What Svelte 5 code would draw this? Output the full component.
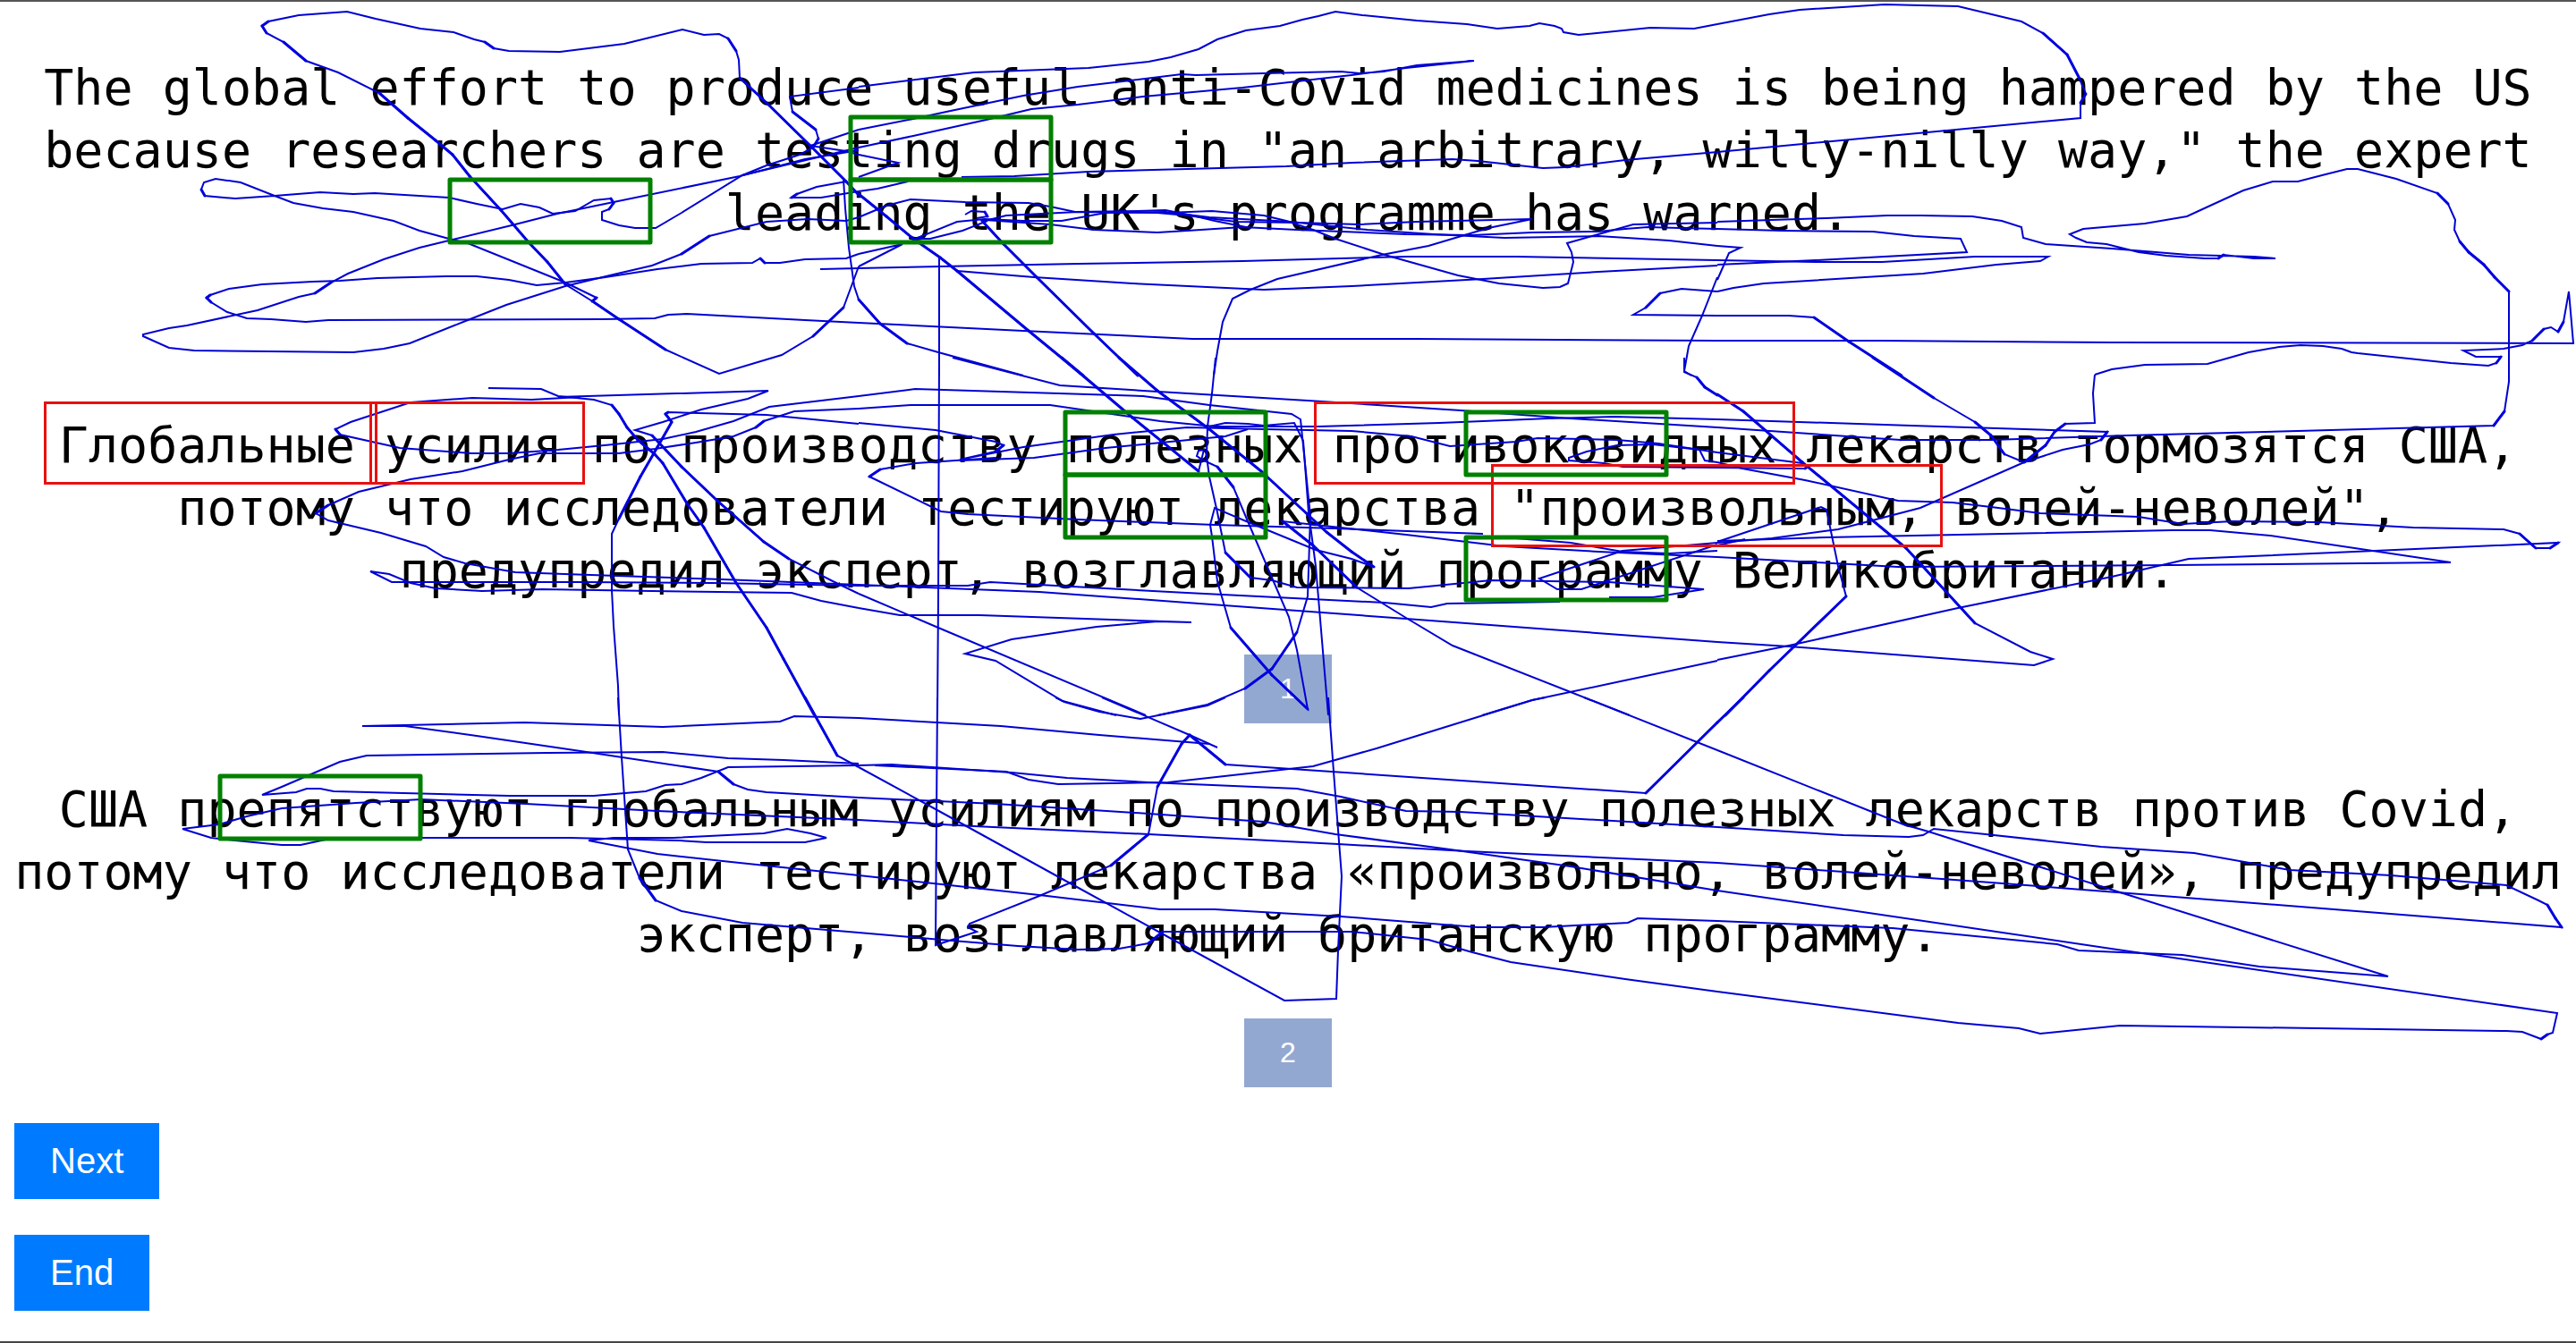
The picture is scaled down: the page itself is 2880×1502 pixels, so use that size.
<script>
  const source =
    'The global effort to produce useful anti-Covid medicines is being hampered by the US because researchers are testing drugs in "an arbitrary, willy-nilly way," the expert leading the UK\'s programme has warned.';

  const translations = [
    'Глобальные усилия по производству полезных противоковидных лекарств тормозятся США, потому что исследователи тестируют лекарства "произвольным, волей-неволей", предупредил эксперт, возглавляющий программу Великобритании.',
    'США препятствуют глобальным усилиям по производству полезных лекарств против Covid, потому что исследователи тестируют лекарства «произвольно, волей-неволей», предупредил эксперт, возглавляющий британскую программу.'
  ];

  const words = [
    { x: 50, y: 450, w: 370, h: 90 },
    { x: 414, y: 450, w: 238, h: 90 },
    { x: 1470, y: 450, w: 535, h: 90 },
    { x: 1668, y: 520, w: 502, h: 90 }
  ];

  const fixations = [
    [503, 201], [951, 131], [951, 201], [1191, 461],
    [1191, 531], [1639, 461], [1639, 601], [246, 868]
  ];

  // Gaze samples are stored per screen region, in tracker units.
  const UNIT_X = 30 / 49;
  const UNIT_Y = 1 / 3;

  const regions = [
    { x: 0, y: 0, lines: [
      '1568,655 1545,610 1480,490 1400,345 1350,260 1349,200 1344,170 1330,130 1313,115 1285,117 1247,100 1140,147 1022,175 930,170 902,161 886,140 866,131 828,108 768,97 686,64 634,38 546,52 490,73 478,86 487,110 518,141 558,204 617,242 693,311 745,397 795,470 826,520 858,592 915,704 966,812 1000,880 1033,955 1085,1015 1130,1070 1215,1174 1313,1255 1428,1190 1485,1128 1540,1033 1556,950 1568,895',
      '1082,1012 1090,1000 1033,948 855,817 820,800 766,773 718,740 645,712 590,700 535,680 502,657 440,612 393,600 373,612 368,636 374,656 430,666 502,657 585,646 645,651 685,647 820,663 870,685 918,702 950,683 985,697 1010,718 1050,708 1085,672 1115,667 1120,680 1113,703 1100,712 1099,738 1130,757 1160,765 1197,765 1245,714 1355,587 1400,555 1460,520 1485,495 1495,465 1490,435 1447,375 1442,325 1568,295',
      '1568,505 1470,535 1350,590 1120,678 1018,718 935,755 826,804 766,832 700,870 635,917 605,947 575,983 545,997 470,1040 342,1092 308,1100 262,1122 262,1128 308,1166 355,1176 645,1181 700,1171 748,1152 855,1073 925,1022 1033,960 1120,922 1190,892 1245,852 1295,793 1400,745 1475,735 1545,742 1568,728',
      '1568,1082 1470,1073 1255,1054 1220,1056 1195,1067 1100,1070 600,1075 558,1081 495,1071 450,1069 415,1047 385,1015 378,1000 384,990 418,970 478,954 570,944 620,941 690,934 815,926 870,927 930,938 980,957 1033,949 1105,930 1200,903 1280,884 1373,882 1388,868 1397,882 1425,883 1470,871 1545,867 1568,852',
      '1545,610 1492,626 1455,650 1446,664 1500,664 1568,642',
      '1480,490 1545,507 1568,520',
      '1480,490 1568,436',
      '1355,587 1568,496',
      '1497,902 1568,900',
      '1540,600 1543,700 1550,830 1560,960 1568,1005'
    ] },
    { x: 960, y: 0, lines: [
      '0,292 210,244 420,228 530,208 570,193 620,164 655,131 707,102 770,86 810,66 840,55 870,40 920,52 1020,70 1110,82 1166,97 1225,86 1243,77 1270,86 1283,97 1287,108 1315,118 1445,92 1525,96 1568,82',
      '0,436 100,399 160,374 300,320 400,292 590,248 615,252 740,246 880,240 915,246 958,240 1020,220 1124,205 1000,228 900,252 700,294 520,325 400,350 315,367 240,399 100,455 0,496',
      '0,520 72,546 0,595',
      '188,593 285,590 420,577 600,567 780,557 900,545 1085,534 1130,540 1250,565 1290,560 1400,537 1568,511',
      '0,642 35,632 90,608',
      '0,728 50,690 95,670 195,678 310,680 350,693 395,710 510,708 560,705 610,722 650,740 715,765',
      '195,720 205,708 230,712 235,725 215,732 230,740 270,722 400,712 545,715 600,722 690,745 800,748 915,752 1020,745 1230,735 1150,765 1040,825 955,855 765,937 715,972 683,1002 664,1080 655,1180 648,1260',
      '560,715 645,707 740,722 780,742 830,770 870,800 960,855 1095,925 1170,950 1250,967 1280,962 1295,950 1305,880 1302,845 1293,815 1350,787 1415,753 1568,746',
      '230,738 350,752 430,772 545,779 600,775 700,762 800,770 1000,785 1120,790 1230,780 1350,778 1400,768 1440,763 1500,765 1568,768',
      '100,803 180,745 230,735 300,742 370,740 450,715 560,712 640,730 790,745 850,757 930,772 1050,787 1180,797 1350,792 1480,808 1568,825',
      '100,800 130,800 190,775 235,742',
      '0,650 50,725 100,800 148,865 180,910 310,1110 410,1260',
      '225,740 265,820 325,930 430,1120 510,1260',
      '147,860 147,1260',
      '0,900 150,895 400,885 700,876 1000,861 1200,862 1568,874',
      '180,910 320,930 500,950 740,973 900,960 1140,935 1350,912 1568,890',
      '0,1083 300,1110 610,1136 1020,1138 1568,1142',
      '0,1005 40,1085 88,1152 145,1183 300,1260',
      '0,852 50,832 80,818 0,895',
      '1568,978 1503,970 1463,985 1437,1033 1415,1055 1568,1058',
      '1568,930 1540,1060 1515,1160 1507,1245 1520,1260'
    ] },
    { x: 1920, y: 0, lines: [
      '0,82 95,48 150,34 305,16 440,20 555,72 595,112 638,182 662,265 673,315 663,345 663,395 0,511',
      '0,744 200,732 310,722 370,722 465,727 520,742 555,763 558,798 600,818 720,834 860,855 980,860 1020,866 980,868 925,855 915,866 890,868 820,857 770,845 710,818 675,812 655,798 643,787 668,769 780,750 858,727 900,690 960,638 1015,609 1060,608 1110,584 1150,566 1170,566 1240,600 1315,648 1335,685 1348,737 1346,770 1355,810 1372,845 1400,888 1420,930 1445,978 1445,1260',
      '0,768 120,773 285,776 360,792 445,800 455,845 180,872 0,888',
      '0,825 42,831 22,850 12,890 0,940',
      '0,874 180,879 300,878 470,860 605,862 590,877 510,888 375,918 85,952 30,965 0,978',
      '0,1058 130,1060 177,1066 240,1145 337,1260',
      '0,1142 300,1143 720,1148 1563,1152 1555,978 1545,1080 1535,1112 1523,1097 1510,1105 1488,1142 1470,1157 1435,1170 1363,1175 1385,1196 1430,1198 1422,1217 1408,1228 1340,1217 1170,1184 1158,1183 1140,1170 1105,1162 1065,1159 1025,1165 970,1182 895,1220 780,1224 720,1240 690,1258'
    ] },
    { x: 0, y: 400, lines: [
      '892,102 988,104 1020,130 1085,142 1118,160 1130,188 1145,235 1165,275 1195,325 1210,355 1255,490 1285,570 1345,755 1400,905 1430,1010 1487,1198',
      '1020,133 1403,112 1365,138 1280,173 1210,215 1160,243 1190,262 1245,365 1310,480 1395,618 1440,675 1520,750 1568,792',
      '1568,130 1405,166 1340,213 1270,250 1210,273 1120,292 1020,310 930,320 860,320 730,302 620,258 613,240 640,215 750,150 863,135 970,140 1060,132',
      '1568,171 1450,180 1395,213 1380,235 1340,263 1270,285 1195,305 1130,322 985,320 930,342 845,382 750,408 655,450 600,495 577,523 600,545 695,587 778,632 810,668 850,690 940,720 1030,725 1320,745 1568,762',
      '1568,222 1400,192 1220,183 1215,190 1226,215 1200,300 1170,400 1130,540 1118,590 1118,780 1120,900 1128,1100 1130,1200',
      '1568,840 1500,815 1445,789 1190,784 990,777 880,784 795,773 750,757 710,727 676,718 715,753 1060,752 1300,757 1568,765'
    ] },
    { x: 960, y: 400, lines: [
      '147,0 145,800 143,1200',
      '172,0 368,92 520,112 820,145 1100,178 1300,203 1568,234',
      '0,130 103,106 520,128 640,158 790,190 807,208 825,530 820,800 800,920 755,1045 705,1110 637,1165 545,1200',
      '0,170 95,160 350,159 550,212 650,230 840,232 1060,220 1260,203 1380,197 1568,208',
      '0,220 140,243 250,283 265,295 250,315 185,342 300,300 465,257 600,235 740,240 900,247 1010,264 1080,297 1200,283 1240,271 1385,275 1460,288 1568,317',
      '185,345 320,335 450,302 670,265 710,240',
      '640,232 670,220 710,222 740,228 795,220 812,280 822,520 835,700 858,1200',
      '370,0 500,200 620,380 630,310 620,312 618,330 630,345 655,365 685,435 710,550 760,760 785,870 800,980 820,1180 755,1065 680,905 655,750 645,600 642,560 650,505 715,555 835,645 900,675 940,703 900,650 855,585 735,380 640,240 545,110 475,0',
      '652,0 645,120 637,230 636,330 640,400 655,520 670,655 715,738 755,748 800,770 1005,773 1155,747 1370,752 1543,776 1450,803 1370,803',
      '250,335 105,355 40,375 20,400 150,515 200,525 400,543 650,560 870,574 1140,592',
      '1200,605 1300,620 1395,650 1480,658 1568,648',
      '1568,668 1350,650 1180,633 1000,595 850,565 775,550 830,630 910,770 1000,872 1085,965 1300,1122 1408,1200',
      '0,765 200,765 240,753 300,758 600,790 960,822 1045,838 1075,826 1280,820',
      '0,762 330,785 600,822 1000,876 1568,953',
      '0,840 75,864 220,863 607,888 545,884 435,902 280,945 195,993 250,1018 372,1153 470,1200',
      '0,792 145,905 525,1200',
      '1138,1200 1230,1150 1568,1018',
      '1568,622 1395,648 1243,740 1275,776 1320,778 1568,628',
      '1507,0 1507,48 1530,65 1545,98 1568,125',
      '1568,352 1545,345 1535,310 1450,290 1385,295 1330,315 1297,335 1297,345 1360,355 1395,366 1568,370'
    ] },
    { x: 1920, y: 400, lines: [
      '285,0 395,135 470,215 500,262 525,325 560,352 600,295 615,250 635,223 690,220 686,120 690,58',
      '560,352 630,310 680,292 700,275 712,250 355,228 0,207',
      '0,234 335,275 500,275 750,260 1060,246 1418,228 1437,180 1445,80 1445,0',
      '0,122 48,180 155,350 345,640 470,892 572,988 613,1010 578,1033 130,970 0,953',
      '0,317 155,353',
      '0,368 160,372 165,367',
      '0,352 45,372 160,412 330,480 430,487 500,502 590,522 770,535 850,557 940,550 1100,552 1270,570 1435,576 1465,592 1495,638 1520,640 1535,620 1200,647 860,676 720,735 440,840 130,965 0,1015',
      '0,620 100,605 220,576 370,505 560,352',
      '0,618 190,500 200,510 220,700 235,800 95,1050 15,1200',
      '0,616 200,603 830,579 900,578 1010,598 1340,688 830,695 330,702 0,668',
      '0,630 50,610'
    ] },
    { x: 0, y: 780, lines: [
      '1128,0 1135,200 1147,510 1168,605 1198,680 1245,716 1355,755 1568,788',
      '1470,0 1528,195 1568,235',
      '1568,68 1450,62 1425,82 1210,100 957,85 662,97 740,97 870,128 1060,180 1312,248 1340,290 1365,308 1400,317 1568,335',
      '1568,222 1430,210 1330,205 1210,182 1000,187 670,196 620,215 515,300 478,327 540,317 560,307 585,306 610,314 930,330 1085,330 1180,314 1215,295 1245,290 1280,270 1330,235 1568,227',
      '1568,412 1200,380 960,358 770,342 650,355 515,373 450,400 400,425 333,442 385,472 430,480 515,496 548,496 595,478',
      '768,470 1040,471 1240,480 1290,487 1470,487 1510,470 1480,455 1437,440 1395,455 1230,472 1120,470 1075,480 1200,525 1320,548 1568,598'
    ] },
    { x: 960, y: 780, lines: [
      '143,0 142,400 140,832 215,785 200,770 203,758 330,665 460,565 530,460 545,300 590,155 605,125 670,224 1438,320 1568,85',
      '0,68 260,97 440,126 640,155',
      '445,0 605,125 655,168',
      '360,0 375,15 440,48 515,73 637,27 670,0',
      '858,0 868,250 882,600 876,850 873,1010 778,1018 550,790 380,618 140,375 0,235',
      '0,227 60,225 280,253 380,271 530,285 800,307 880,332 1000,382 1100,385 1568,435',
      '30,228 270,250 310,277 365,292 565,285 830,230 945,172 1230,10 1255,0',
      '1325,0 1568,178',
      '0,336 250,358 530,390 740,418 870,458 1080,510 1300,568 1568,648',
      '0,412 210,432 530,460 875,492 1110,515 1568,555',
      '0,598 330,662 550,710 650,710 880,736 1130,770 1250,770 1405,755 1423,740 1568,750',
      '0,788 150,812 290,835 400,845 475,842 530,825 555,787 900,785 1040,812 1120,855 1190,887 1400,945 1568,988'
    ] },
    { x: 1920, y: 780, lines: [
      '48,0 0,85',
      '0,178 340,425 385,450 730,650 1225,937 990,902 850,865 660,848 620,828 320,774 0,750',
      '0,435 230,462 350,468 375,462 395,442 490,460 700,500 870,522 1045,578 1230,598 1440,630 1500,680 1515,695 1530,740 1542,772 730,655 500,620 230,585 0,555',
      '0,648 730,845 1533,1058 1525,1125 1515,1130 1505,1145 1470,1122 1440,1118 735,1102 590,1127 550,1110 440,1092 0,988'
    ] }
  ];

  function toScreen(region, line) {
    return line.split(' ').map((pair) => {
      const [x, y] = pair.split(',').map(Number);
      return [Math.round(region.x + x * UNIT_X), Math.round(region.y + y * UNIT_Y)];
    });
  }

  const traces = regions.flatMap((region) => region.lines.map((line) => toScreen(region, line)));

  // Diagonal jumps between samples are drawn with a heavier stroke.
  function isDiagonal([x1, y1], [x2, y2]) {
    const slope = Math.abs((y2 - y1) / (x2 - x1 || 1));
    return x1 !== x2 && slope > 0.63 && slope < 2;
  }

  const jumps = traces.flatMap((points) =>
    points
      .slice(1)
      .map((point, i) => [points[i], point])
      .filter(([from, to]) => isDiagonal(from, to))
  );
</script>

<main class="page">
  <p class="sentence source">{source}</p>

  {#each translations as text, i}
    <section class="option">
      <p class="sentence">{text}</p>
      <button class="choice" type="button">{i + 1}</button>
    </section>
  {/each}

  <div class="actions">
    <button class="action" type="button">Next</button>
    <button class="action" type="button">End</button>
  </div>

  <svg class="overlay" viewBox="0 0 2880 1502" aria-hidden="true">
    <g class="gaze">
      {#each traces as points}
        <polyline points={points.join(' ')} />
      {/each}
    </g>
    <g class="jump">
      {#each jumps as [from, to]}
        <line x1={from[0]} y1={from[1]} x2={to[0]} y2={to[1]} />
      {/each}
    </g>
    <g class="word">
      {#each words as box}
        <rect x={box.x} y={box.y} width={box.w} height={box.h} />
      {/each}
    </g>
    <g class="fixation">
      {#each fixations as [x, y]}
        <rect {x} {y} width="224" height="70" />
      {/each}
    </g>
  </svg>
</main>

<style>
  :global(body) {
    background: #fff;
  }

  .page {
    position: relative;
    box-sizing: border-box;
    min-height: 100vh;
    padding: 61px 16px 34px;
    border-top: 2px solid #555;
    border-bottom: 2px solid #444;
    font-family: 'Liberation Sans', Arial, sans-serif;
  }

  .sentence {
    margin: 0;
    color: #000;
    font-family: 'DejaVu Sans Mono', Consolas, monospace;
    font-size: 55px;
    line-height: 70px;
    text-align: center;
  }

  .source {
    margin-bottom: 190px;
  }

  .option {
    display: flex;
    flex-direction: column;
    align-items: center;
    gap: 59px;
  }

  .option + .option {
    margin-top: 61px;
  }

  .choice,
  .action {
    padding: 20px 40px;
    border: 0;
    color: #fff;
    font-family: inherit;
  }

  .choice {
    background: #93a8d0;
    font-size: 32px;
    line-height: 37px;
  }

  .actions {
    display: flex;
    flex-direction: column;
    align-items: flex-start;
    gap: 40px;
    margin-top: 40px;
  }

  .action {
    background: #007bff;
    font-size: 40px;
    line-height: 45px;
  }

  .overlay {
    position: absolute;
    top: -2px;
    left: 0;
    width: 100%;
    pointer-events: none;
  }

  .gaze {
    fill: none;
    stroke: #0000d2;
    stroke-width: 2;
  }

  .jump {
    stroke: #0000e0;
    stroke-width: 3;
    stroke-linecap: round;
  }

  .word {
    fill: none;
    stroke: #e81010;
    stroke-width: 3;
    shape-rendering: crispEdges;
  }

  .fixation {
    fill: none;
    stroke: #008000;
    stroke-width: 5;
    stroke-linejoin: round;
  }
</style>
